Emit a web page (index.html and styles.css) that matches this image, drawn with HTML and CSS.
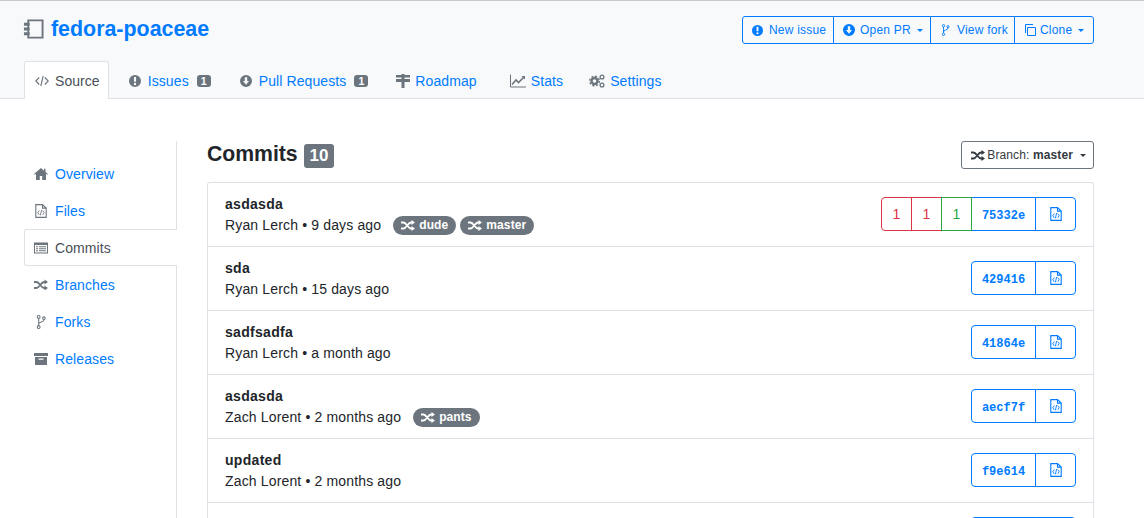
FILE: index.html
```html
<!DOCTYPE html>
<html lang="en">
<head>
  <meta charset="UTF-8" />
  <title>Commits - fedora-poaceae</title>
  <link rel="stylesheet" href="styles.css">
</head>
<body>
  <svg class="defs" width="0" height="0">
    <defs>
      <symbol id="i-issue" viewBox="0 0 8 8"><path fill-rule="evenodd" d="M4 0a4 4 0 1 0 0 8 4 4 0 0 0 0-8zM3.300 1.300h1.400v3.200H3.300zM4 5.200a.8.8 0 1 1 0 1.600.8.8 0 0 1 0-1.600z"/></symbol>
      <symbol id="i-pr" viewBox="0 0 8 8"><path fill-rule="evenodd" d="M4 0a4 4 0 1 0 0 8 4 4 0 0 0 0-8zM3.200 1.500h1.600V4H6L4 6.500 2 4h1.200z"/></symbol>
      <symbol id="i-code" viewBox="0 0 14 12"><path d="M4.200 2.500L.8 6l3.400 3.500M9.800 2.500L13.200 6 9.800 9.500M8.200 1L5.800 11" fill="none" stroke="currentColor" stroke-width="1.100"/></symbol>
      <symbol id="i-roadmap" viewBox="0 0 14 14"><path d="M5.500 0h3v14h-3zM0 1h14v2.500H0zM0 5h14v3H0z"/></symbol>
      <symbol id="i-stats" viewBox="0 0 16 13"><path d="M.5 0v12.500H16" fill="none" stroke="currentColor"/><path d="M2 10l4-4.500 2.500 2.500L14 2.500" fill="none" stroke="currentColor" stroke-width="1.600"/><path d="M11.500 1.500H15V5z"/></symbol>
      <symbol id="i-gears" viewBox="0 0 16 14"><circle cx="5.500" cy="7" r="3" fill="none" stroke="currentColor" stroke-width="2.400"/><circle cx="5.500" cy="7" r="4.800" fill="none" stroke="currentColor" stroke-width="1.400" stroke-dasharray="2 1.770"/><circle cx="13" cy="3" r="1.900" fill="none" stroke="currentColor" stroke-width="1.300"/><circle cx="13" cy="11" r="1.900" fill="none" stroke="currentColor" stroke-width="1.300"/></symbol>
      <symbol id="i-home" viewBox="0 0 14 12"><path d="M7 0L0 6l.6.8L2 5.700V12h3.800V8h2.400v4H12V5.700l1.400 1.100.6-.8-2.500-2.100V.8H10v1.900z"/></symbol>
      <symbol id="i-file" viewBox="0 0 12 14"><path d="M.8.6h6.700l3.700 3.500v9.300H.8zM7.500.6v3.500h3.700" fill="none" stroke="currentColor" stroke-width="1.100"/><path d="M4.300 6.500L2.800 8.700l1.500 2.200M7.700 6.500l1.500 2.200-1.500 2.200M6.600 6L5.400 11.300" fill="none" stroke="currentColor" stroke-width=".9"/></symbol>
      <symbol id="i-list" viewBox="0 0 14 11"><path fill-rule="evenodd" d="M0 0h14v11H0zM1 2.500V10h12V2.500z"/><path d="M2 3.800h2v1H2zM5 3.800h7v1H5zM2 5.800h2v1H2zM5 5.800h7v1H5zM2 7.800h2v1H2zM5 7.800h7v1H5z"/></symbol>
      <symbol id="i-shuffle" viewBox="0 0 14 11"><path d="M0 2.500h2.500c3 0 4.500 6 7.500 6h1.500M0 8.500h2.500c3 0 4.500-6 7.500-6h1.500" fill="none" stroke="currentColor" stroke-width="1.800"/><path d="M10.500 0l3.500 2.500L10.500 5zM10.500 6l3.500 2.500L10.500 11z"/></symbol>
      <symbol id="i-fork" viewBox="0 0 8 12"><circle cx="2" cy="1.700" r="1.200" fill="none" stroke="currentColor" stroke-width=".9"/><circle cx="2" cy="10.300" r="1.200" fill="none" stroke="currentColor" stroke-width=".9"/><circle cx="6.500" cy="2.700" r="1.100" fill="none" stroke="currentColor" stroke-width=".9"/><path d="M2 3v6M2 8c0-2.500 4.500-1.500 4.500-4.200" fill="none" stroke="currentColor" stroke-width=".9"/></symbol>
      <symbol id="i-archive" viewBox="0 0 14 12"><path fill-rule="evenodd" d="M0 0h14v3H0zM1 4h12v8H1zM4.500 5.500v1.200h5V5.500z"/></symbol>
      <symbol id="i-copy" viewBox="0 0 12 12"><path d="M3.500 3.500h8v8h-8zM1.500 9V.5H9" fill="none" stroke="currentColor"/></symbol>
    </defs>
  </svg>

  <header class="repo-header">
    <div class="repo-top">
      <h1 class="repo-title">
        <svg class="repo-icon" viewBox="0 0 22 20"><path d="M5.500 1h15v18h-15zM5.500 1v18" fill="none" stroke="currentColor" stroke-width="2"/><path d="M1 3.500h6v3H1zM1 8.500h6v3H1zM1 13.500h6v3H1z"/></svg>
        <a href="#">fedora-poaceae</a>
      </h1>
      <div class="btn-group">
        <a class="btn btn-issue" href="#"><svg class="ic ic-11"><use href="#i-issue"/></svg>New issue</a>
        <a class="btn btn-pr caret" href="#"><svg class="ic ic-12"><use href="#i-pr"/></svg>Open PR</a>
        <a class="btn btn-fork" href="#"><svg class="ic ic-fork"><use href="#i-fork"/></svg>View fork</a>
        <a class="btn btn-clone caret" href="#"><svg class="ic ic-12"><use href="#i-copy"/></svg>Clone</a>
      </div>
    </div>
    <nav class="tabs">
      <a class="tab active" href="#"><svg class="ic ic-14"><use href="#i-code"/></svg>Source</a>
      <a class="tab" href="#"><svg class="ic ic-12"><use href="#i-issue"/></svg>Issues<span class="count">1</span></a>
      <a class="tab" href="#"><svg class="ic ic-12"><use href="#i-pr"/></svg>Pull Requests<span class="count">1</span></a>
      <a class="tab tab-roadmap" href="#"><svg class="ic ic-14"><use href="#i-roadmap"/></svg>Roadmap</a>
      <a class="tab tab-stats" href="#"><svg class="ic ic-16"><use href="#i-stats"/></svg>Stats</a>
      <a class="tab tab-settings" href="#"><svg class="ic ic-16"><use href="#i-gears"/></svg>Settings</a>
    </nav>
  </header>

  <div class="page">
    <aside class="sidebar">
      <a class="side-link" href="#"><svg class="ic ic-14"><use href="#i-home"/></svg>Overview</a>
      <a class="side-link" href="#"><svg class="ic ic-14"><use href="#i-file"/></svg>Files</a>
      <a class="side-link active" href="#"><svg class="ic ic-14"><use href="#i-list"/></svg>Commits</a>
      <a class="side-link" href="#"><svg class="ic ic-14"><use href="#i-shuffle"/></svg>Branches</a>
      <a class="side-link" href="#"><svg class="ic ic-14"><use href="#i-fork"/></svg>Forks</a>
      <a class="side-link" href="#"><svg class="ic ic-14"><use href="#i-archive"/></svg>Releases</a>
    </aside>

    <main class="content">
      <div class="content-head">
        <h2>Commits <span class="total">10</span></h2>
        <button class="branch-btn"><svg class="ic ic-13"><use href="#i-shuffle"/></svg><span>Branch: <b>master</b></span></button>
      </div>

      <div class="commits">
        <div class="commit">
          <div class="commit-info">
            <a class="commit-title" href="#">asdasda</a>
            <div class="commit-meta">Ryan Lerch • 9 days ago
              <span class="tags">
                <span class="tag"><svg class="ic ic-13"><use href="#i-shuffle"/></svg>dude</span>
                <span class="tag"><svg class="ic ic-13"><use href="#i-shuffle"/></svg>master</span>
              </span>
            </div>
          </div>
          <div class="actions">
            <span class="stat red">1</span><span class="stat red">1</span><span class="stat green">1</span>
            <a class="hash" href="#">75332e</a><a class="tree" href="#"><svg class="ic ic-14"><use href="#i-file"/></svg></a>
          </div>
        </div>
        <div class="commit">
          <div class="commit-info">
            <a class="commit-title" href="#">sda</a>
            <div class="commit-meta">Ryan Lerch • 15 days ago</div>
          </div>
          <div class="actions"><a class="hash" href="#">429416</a><a class="tree" href="#"><svg class="ic ic-14"><use href="#i-file"/></svg></a></div>
        </div>
        <div class="commit">
          <div class="commit-info">
            <a class="commit-title" href="#">sadfsadfa</a>
            <div class="commit-meta">Ryan Lerch • a month ago</div>
          </div>
          <div class="actions"><a class="hash" href="#">41864e</a><a class="tree" href="#"><svg class="ic ic-14"><use href="#i-file"/></svg></a></div>
        </div>
        <div class="commit">
          <div class="commit-info">
            <a class="commit-title" href="#">asdasda</a>
            <div class="commit-meta">Zach Lorent • 2 months ago
              <span class="tags">
                <span class="tag"><svg class="ic ic-13"><use href="#i-shuffle"/></svg>pants</span>
              </span>
            </div>
          </div>
          <div class="actions"><a class="hash" href="#">aecf7f</a><a class="tree" href="#"><svg class="ic ic-14"><use href="#i-file"/></svg></a></div>
        </div>
        <div class="commit">
          <div class="commit-info">
            <a class="commit-title" href="#">updated</a>
            <div class="commit-meta">Zach Lorent • 2 months ago</div>
          </div>
          <div class="actions"><a class="hash" href="#">f9e614</a><a class="tree" href="#"><svg class="ic ic-14"><use href="#i-file"/></svg></a></div>
        </div>
        <div class="commit">
          <div class="actions"><span class="hash"></span><span class="tree"></span></div>
        </div>
      </div>
    </main>
  </div>
</body>
</html>
```

FILE: styles.css
```css
html, body { height: 100%; }
body {
  margin: 0; overflow: hidden; background: #fff; color: #212529;
  font-family: "Liberation Sans", Arial, sans-serif; font-size: 14px;
}
a { color: #007bff; text-decoration: none; }
.defs { display: block; height: 0; }
.ic { display: inline-block; flex: none; fill: currentColor; color: #6c757d; }
.ic-11 { width: 11px; height: 11px; }
.ic-12 { width: 12px; height: 12px; }
.ic-13 { width: 14px; height: 11px; }
.ic-14 { width: 14px; height: 14px; }
.ic-16 { width: 16px; height: 14px; }
.ic-fork { width: 9px; height: 12px; }

/* header */
.repo-header {
  background: #f8f9fa; border-top: 1px solid #c8cbce; border-bottom: 1px solid #dee2e6;
  height: 97px; padding: 0 50px 0 24px;
  display: flex; flex-direction: column; justify-content: space-between;
}
.repo-top { display: flex; justify-content: space-between; align-items: flex-start; padding-top: 15px; }
.repo-title { margin: -1px 0 0; display: flex; align-items: center; gap: 7px; font-size: 21.400px; line-height: 28px; }
.repo-icon { width: 21px; height: 20px; margin-left: -1px; fill: currentColor; color: #6c757d; }
.btn-group { display: flex; border: 1px solid #007bff; border-radius: 3px; height: 26px; }
.btn {
  display: flex; align-items: center; box-sizing: border-box; gap: 6px; padding-left: 9px;
  font-size: 12px; letter-spacing: .2px; border-left: 1px solid #007bff;
}
.btn .ic { color: #007bff; }
.btn-issue { width: 90px; border-left: 0; }
.btn-pr { width: 97px; gap: 5px; }
.btn-fork { width: 84px; padding-left: 10px; gap: 7px; }
.btn-clone { width: 79px; gap: 4px; }
.caret::after {
  content: ""; border: 3.500px solid transparent; border-top-color: #007bff; border-bottom: 0;
  margin-left: 1px;
}
.btn-clone::after { margin-left: 2px; }

.tabs { display: flex; margin-bottom: -1px; }
.tab {
  display: flex; align-items: center; gap: 7px; height: 37px; padding: 0 19px 0 10px;
  border: 1px solid transparent; border-width: 1px 0 0; border-radius: 3px 3px 0 0;
  letter-spacing: .1px;
}
.tab.active {
  background: #fff; border: 1px solid #dee2e6; border-bottom: 0; color: #495057;
  gap: 6px; padding: 0 8px 0 10px; margin-right: 10px; letter-spacing: .05px;
}
.tab-roadmap { padding-left: 9px; gap: 5px; }
.tab-stats { padding: 0 16px 0 14px; gap: 5px; }
.tab-settings { gap: 5px; }
.count {
  background: #6c757d; color: #fff; font-size: 10.500px; font-weight: 700; line-height: 12px;
  padding: 0 4px; border-radius: 3px; margin-left: 1px;
}

/* body */
.page { display: flex; padding: 42px 50px 0 24px; align-items: stretch; height: 400px; }
.sidebar {
  width: 152px; flex: none; border-right: 1px solid #dee2e6; padding-top: 14px;
  display: flex; flex-direction: column;
}
.side-link {
  display: flex; align-items: center; gap: 7px; height: 37px; padding-left: 10px;
  letter-spacing: .1px;
}
.side-link.active {
  background: #fff; color: #495057; margin-right: -1px;
  border: 1px solid #dee2e6; border-right: 0; border-radius: 3px 0 0 3px;
  height: 35px; padding-left: 9px;
}
.content { flex: 1; margin-left: 30px; min-width: 0; }
.content-head { display: flex; justify-content: space-between; align-items: flex-start; height: 41px; }
h2 { margin: -1px 0 0; font-size: 21.200px; line-height: 28px; }
.total {
  display: inline-block; background: #6c757d; color: #fff; font-size: 17px; line-height: 24px;
  padding: 0 6px; border-radius: 3px; vertical-align: 0;
}
.branch-btn {
  display: flex; align-items: center; gap: 2px; height: 28px; padding: 0 7px 0 9px;
  background: #fff; border: 1px solid #6c757d; border-radius: 3px; color: #343a40;
  font: 12px "Liberation Sans", Arial, sans-serif; letter-spacing: .12px;
}
.branch-btn .ic { color: #343a40; }
.branch-btn::after {
  content: ""; border: 3.500px solid transparent; border-top-color: #343a40; border-bottom: 0;
  margin-left: 5px;
}

.commits { border: 1px solid #dee2e6; border-bottom: 0; border-radius: 3px 3px 0 0; }
.commit {
  display: flex; justify-content: space-between; align-items: flex-start;
  height: 63px; padding: 0 17px; border-bottom: 1px solid #dee2e6;
}
.commit-info { padding-top: 10.500px; }
.commit-title { display: block; color: #212529; font-weight: 700; line-height: 21px; letter-spacing: .3px; }
.commit-meta { line-height: 21px; letter-spacing: .15px; display: flex; align-items: center; }
.tags { display: inline-flex; gap: 4px; margin-left: 12px; }
.tag {
  display: inline-flex; align-items: center; gap: 4px; height: 19px; padding: 0 8px;
  background: #6c757d; color: #fff; border-radius: 10px; font-size: 12px; font-weight: 700;
  letter-spacing: .1px;
}
.tag .ic { color: #fff; }
.actions { display: flex; height: 34px; margin: 14px 0 0 auto; }
.actions > * {
  display: flex; align-items: center; justify-content: center; box-sizing: border-box;
  border: 1px solid #007bff; margin-left: -1px;
}
.stat { width: 31px; font-size: 14px; }
.stat:first-child { border-radius: 4px 0 0 4px; }
.red { color: #dc3545; border-color: #dc3545 !important; }
.green { color: #28a745; border-color: #28a745 !important; z-index: 1; }
.hash { width: 65px; padding-top: 3px; font: 700 12px "Liberation Mono", monospace; }
.hash:first-child { border-radius: 4px 0 0 4px; }
.tree { width: 41px; border-radius: 0 4px 4px 0; }
.tree .ic { color: #007bff; }
```
